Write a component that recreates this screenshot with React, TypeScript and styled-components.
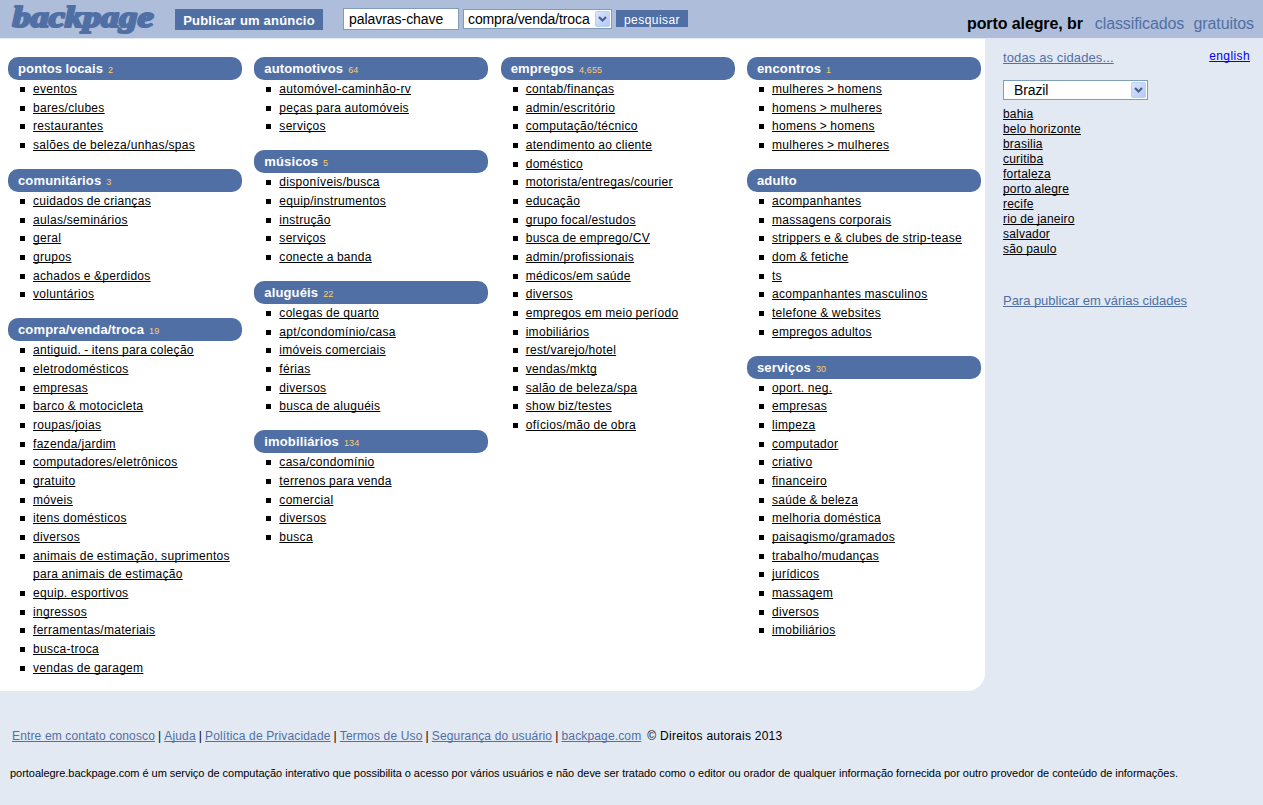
import React from 'react';
import styled, { createGlobalStyle } from 'styled-components';

const blue = '#5070a5';

const Global = createGlobalStyle`
  * { box-sizing: border-box; }
  body { margin: 0; background: #e2e9f3; color: #000; font-family: "Liberation Sans", Arial, sans-serif; font-size: 12px; }
  ul { list-style: none; margin: 0; padding: 0; }
`;

const Page = styled.div`width: 1263px; height: 805px; overflow: hidden;`;

const Header = styled.header`
  display: flex; align-items: flex-start; height: 38px; background: #aebdd9; white-space: nowrap;
`;
const Logo = styled.svg`display: block; width: 164px; height: 38px; flex: none;`;
const PostButton = styled.button`
  margin: 9px 0 0 11px; width: 148px; height: 21px; padding: 2px 0 0; border: 0; background: ${blue}; color: #fff;
  font: bold 13px "Liberation Sans", Arial, sans-serif; letter-spacing: 0.2px; white-space: nowrap;
`;
const Keyword = styled.div`
  margin: 8px 0 0 20px; width: 116px; height: 22px; border: 1px solid #7f9db9; background: #fff;
  padding: 0 5px; font-size: 14px; line-height: 20px; letter-spacing: -0.05px;
`;
const SelectBox = styled.div<{ $w: number; $h: number; $pad: number }>`
  display: flex; align-items: center; justify-content: space-between; flex: none;
  width: ${p => p.$w}px; height: ${p => p.$h}px; border: 1px solid #7f9db9; background: #fff;
  padding: 1px 1px 1px ${p => p.$pad}px; font-size: 14px; letter-spacing: -0.12px; white-space: nowrap;
`;
const CategorySlot = styled.div`margin: 9px 0 0 4px;`;
const Arrow = styled.svg`display: block; width: 15px; height: 16px; flex: none;`;
const SearchButton = styled.button`
  margin: 10px 0 0 4px; width: 72px; height: 17px; padding: 3px 0 0; border: 0; background: ${blue}; color: #fff;
  font: 12px/14px "Liberation Sans", Arial, sans-serif; letter-spacing: 0.45px;
`;
const Place = styled.div`
  margin: 15px 9px 0 auto; display: flex; align-items: baseline; gap: 12px; font-size: 16px; line-height: 18px;
`;
const City = styled.strong`letter-spacing: -0.1px;`;
const Tagline = styled.span`color: ${blue}; letter-spacing: -0.1px; word-spacing: 5px;`;

const Body = styled.div`display: flex; align-items: flex-start; padding-top: 1px;`;
const Board = styled.main`
  display: flex; gap: 12.33px; width: 985px; height: 652px; padding: 18px 0 0 8px; background: #fff;
  border-bottom-right-radius: 18px; flex: none;
`;
const Column = styled.div`width: 234px; flex: none;`;
const Section = styled.section`margin-bottom: 14.43px;`;
const Heading = styled.h2`
  margin: 0; height: 22.9px; padding: 0 10px; border-radius: 10px; background: ${blue}; color: #fff;
  font-size: 13px; line-height: 23px; font-weight: bold; white-space: nowrap; letter-spacing: 0.14px; word-spacing: -0.5px;
`;
const Count = styled.span`margin-left: 5px; color: #ffcc66; font-size: 9px; font-weight: normal; letter-spacing: 0.15px;`;
const Item = styled.li`
  position: relative; padding-left: 25px; line-height: 18.67px; letter-spacing: 0.3px; word-spacing: -0.4px;
  &::before { content: ""; position: absolute; left: 12px; top: 7px; width: 5px; height: 5px; background: #000; }
`;
const Link = styled.a<{ $color?: string }>`
  color: ${p => p.$color ?? '#000'}; text-decoration: underline; text-underline-offset: 1px;
  text-decoration-thickness: 1px; text-decoration-skip-ink: none;
`;

const Side = styled.aside`flex: 1; padding: 9px 13px 0 18px;`;
const SideTop = styled.div`display: flex; justify-content: space-between; height: 32px; line-height: 16px;`;
const AllCities = styled.div`padding-top: 2px; font-size: 13px; letter-spacing: 0.12px;`;
const Language = styled.div`letter-spacing: 0.4px;`;
const Cities = styled.ul`margin-top: 7px; line-height: 15px; letter-spacing: 0.2px; word-spacing: -0.3px;`;
const Many = styled.div`margin-top: 36px; font-size: 13px; line-height: 16px; letter-spacing: -0.03px; white-space: nowrap;`;

const Footer = styled.footer`padding: 37px 10px 0;`;
const Links = styled.div`padding-left: 2px; font-size: 12px; line-height: 16px; letter-spacing: 0.15px; white-space: nowrap;`;
const Bar = styled.span`margin: 0 3px;`;
const Copy = styled.span`margin-left: 6px; letter-spacing: 0.26px;`;
const Legal = styled.p`margin: 21px 0 0; font-size: 11px; line-height: 16px; white-space: nowrap; letter-spacing: -0.034px;`;

type Group = { title: string; count?: string; items: string[] };

const columns: Group[][] = [
  [
    { title: 'pontos locais', count: '2', items: ['eventos', 'bares/clubes', 'restaurantes', 'salões de beleza/unhas/spas'] },
    { title: 'comunitários', count: '3', items: ['cuidados de crianças', 'aulas/seminários', 'geral', 'grupos', 'achados e &perdidos', 'voluntários'] },
    { title: 'compra/venda/troca', count: '19', items: ['antiguid. - itens para coleção', 'eletrodomésticos', 'empresas', 'barco & motocicleta', 'roupas/joias', 'fazenda/jardim', 'computadores/eletrônicos', 'gratuito', 'móveis', 'itens domésticos', 'diversos', 'animais de estimação, suprimentos para animais de estimação', 'equip. esportivos', 'ingressos', 'ferramentas/materiais', 'busca-troca', 'vendas de garagem'] },
  ],
  [
    { title: 'automotivos', count: '64', items: ['automóvel-caminhão-rv', 'peças para automóveis', 'serviços'] },
    { title: 'músicos', count: '5', items: ['disponíveis/busca', 'equip/instrumentos', 'instrução', 'serviços', 'conecte a banda'] },
    { title: 'aluguéis', count: '22', items: ['colegas de quarto', 'apt/condomínio/casa', 'imóveis comerciais', 'férias', 'diversos', 'busca de aluguéis'] },
    { title: 'imobiliários', count: '134', items: ['casa/condomínio', 'terrenos para venda', 'comercial', 'diversos', 'busca'] },
  ],
  [
    { title: 'empregos', count: '4,655', items: ['contab/finanças', 'admin/escritório', 'computação/técnico', 'atendimento ao cliente', 'doméstico', 'motorista/entregas/courier', 'educação', 'grupo focal/estudos', 'busca de emprego/CV', 'admin/profissionais', 'médicos/em saúde', 'diversos', 'empregos em meio período', 'imobiliários', 'rest/varejo/hotel', 'vendas/mktg', 'salão de beleza/spa', 'show biz/testes', 'ofícios/mão de obra'] },
  ],
  [
    { title: 'encontros', count: '1', items: ['mulheres > homens', 'homens > mulheres', 'homens > homens', 'mulheres > mulheres'] },
    { title: 'adulto', items: ['acompanhantes', 'massagens corporais', 'strippers e & clubes de strip-tease', 'dom & fetiche', 'ts', 'acompanhantes masculinos', 'telefone & websites', 'empregos adultos'] },
    { title: 'serviços', count: '30', items: ['oport. neg.', 'empresas', 'limpeza', 'computador', 'criativo', 'financeiro', 'saúde & beleza', 'melhoria doméstica', 'paisagismo/gramados', 'trabalho/mudanças', 'jurídicos', 'massagem', 'diversos', 'imobiliários'] },
  ],
];

const cities = ['bahia', 'belo horizonte', 'brasilia', 'curitiba', 'fortaleza', 'porto alegre', 'recife', 'rio de janeiro', 'salvador', 'são paulo'];
const footerLinks = ['Entre em contato conosco', 'Ajuda', 'Política de Privacidade', 'Termos de Uso', 'Segurança do usuário', 'backpage.com'];

const DropArrow = () => (
  <Arrow viewBox="0 0 15 16">
    <defs>
      <linearGradient id="arrowFace" x1="0" y1="0" x2="1" y2="1">
        <stop offset="0" stopColor="#dbe6fe" />
        <stop offset="1" stopColor="#b0c8f8" />
      </linearGradient>
    </defs>
    <rect x="0.5" y="0.5" width="14" height="15" rx="1.5" fill="url(#arrowFace)" stroke="#bccff7" />
    <path d="M4 6l3.5 3.5L11 6" fill="none" stroke="#4d6185" strokeWidth="2.2" />
  </Arrow>
);

export default function App() {
  return (
    <Page>
      <Global />
      <Header>
        <Logo viewBox="0 0 164 38">
          <text x="12.5" y="26.8" textLength="141" lengthAdjust="spacingAndGlyphs" fill={blue} stroke={blue} strokeWidth="2.2"
            strokeLinejoin="round" fontFamily="Liberation Serif, serif" fontSize="28.5" fontWeight="bold" fontStyle="italic">backpage</text>
        </Logo>
        <PostButton>Publicar um anúncio</PostButton>
        <Keyword>palavras-chave</Keyword>
        <CategorySlot>
          <SelectBox $w={149} $h={20} $pad={4}>compra/venda/troca<DropArrow /></SelectBox>
        </CategorySlot>
        <SearchButton>pesquisar</SearchButton>
        <Place>
          <City>porto alegre, br</City>
          <Tagline>classificados gratuitos</Tagline>
        </Place>
      </Header>
      <Body>
        <Board>
          {columns.map((groups, i) => (
            <Column key={i}>
              {groups.map(g => (
                <Section key={g.title}>
                  <Heading>{g.title}{g.count && <Count>{g.count}</Count>}</Heading>
                  <ul>
                    {g.items.map((t, k) => <Item key={k}><Link>{t}</Link></Item>)}
                  </ul>
                </Section>
              ))}
            </Column>
          ))}
        </Board>
        <Side>
          <SideTop>
            <AllCities><Link $color={blue}>todas as cidades...</Link></AllCities>
            <Language><Link $color="#0000ff">english</Link></Language>
          </SideTop>
          <SelectBox $w={145} $h={20} $pad={10}>Brazil<DropArrow /></SelectBox>
          <Cities>
            {cities.map(c => <li key={c}><Link>{c}</Link></li>)}
          </Cities>
          <Many><Link $color={blue}>Para publicar em várias cidades</Link></Many>
        </Side>
      </Body>
      <Footer>
        <Links>
          {footerLinks.map((t, i) => (
            <React.Fragment key={t}>{i > 0 && <Bar>|</Bar>}<Link $color={blue}>{t}</Link></React.Fragment>
          ))}
          <Copy>© Direitos autorais 2013</Copy>
        </Links>
        <Legal>portoalegre.backpage.com é um serviço de computação interativo que possibilita o acesso por vários usuários e não deve ser tratado como o editor ou orador de qualquer informação fornecida por outro provedor de conteúdo de informações.</Legal>
      </Footer>
    </Page>
  );
}
